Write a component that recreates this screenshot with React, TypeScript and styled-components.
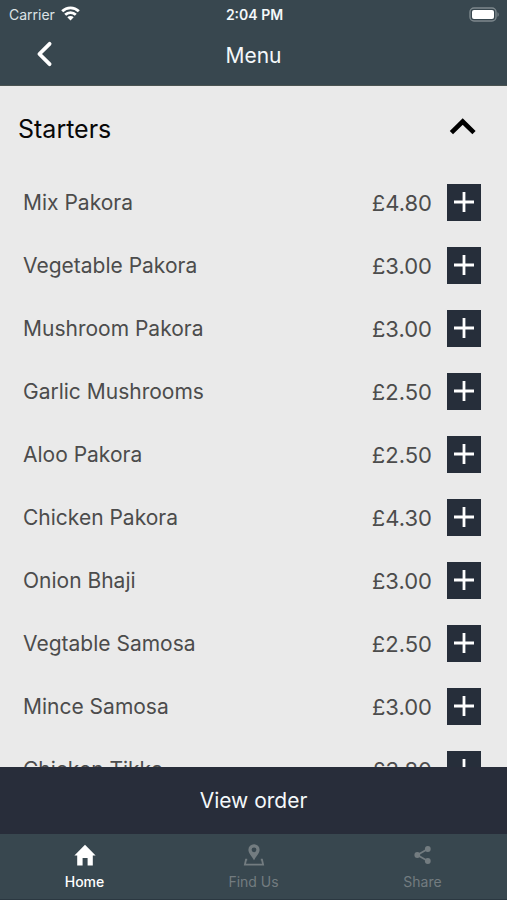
import React, { useState } from 'react';
import styled, { createGlobalStyle } from 'styled-components';

const GlobalStyle = createGlobalStyle`
  * {
    box-sizing: border-box;
  }

  body {
    margin: 0;
    font-family: Inter, 'Liberation Sans', sans-serif;
    background: #eaeaea;
  }

  button {
    margin: 0;
    padding: 0;
    border: 0;
    background: none;
    color: inherit;
    font: inherit;
    cursor: pointer;
  }
`;

const Screen = styled.div`
  display: flex;
  flex-direction: column;
  height: 100vh;
`;

const Header = styled.header`
  background: #38474f;
  color: #f4f8fa;
  border-bottom: 1px solid #4b5452;
`;

const StatusBar = styled.div`
  display: grid;
  grid-template-columns: 1fr auto 1fr;
  align-items: center;
  height: 28px;
  padding: 0 7px 0 9px;
  font-size: 14px;
`;

const Carrier = styled.div`
  display: flex;
  align-items: center;
  gap: 6px;
  color: #dde3e6;
`;

const Time = styled.div`
  font-weight: 600;
`;

const Battery = styled.svg`
  justify-self: end;
`;

const NavBar = styled.div`
  display: grid;
  grid-template-columns: 1fr auto 1fr;
  align-items: center;
  height: 57px;
  padding: 0 32px 2px;
`;

const BackButton = styled.button`
  display: flex;
  justify-self: start;
  padding-bottom: 4px;
`;

const Title = styled.h1`
  margin: 0;
  font-size: 21px;
  line-height: 28px;
  font-weight: 400;
`;

const Content = styled.main`
  flex: 1;
  min-height: 0;
  overflow-y: auto;
  scrollbar-width: none;
`;

const SectionHeader = styled.button`
  display: flex;
  align-items: center;
  justify-content: space-between;
  width: 100%;
  height: 85px;
  padding: 0 30px 0 18px;
  color: #080808;
  font-size: 25px;
  text-align: left;
`;

const List = styled.ul`
  margin: 0;
  padding: 0;
  list-style: none;
`;

const Item = styled.li`
  display: flex;
  align-items: center;
  height: 63px;
  padding: 0 26px 0 23px;
  color: #4c4c4c;
  font-size: 21px;
`;

const Name = styled.span`
  flex: 1;
`;

const Price = styled.span`
  margin-right: 15px;
  font-size: 22px;
`;

const AddButton = styled.button`
  display: flex;
  align-items: center;
  justify-content: center;
  width: 34px;
  height: 37px;
  padding-bottom: 2px;
  background: #262e3a;
  color: #fff;
`;

const OrderButton = styled.button`
  flex: none;
  height: 67px;
  background: #282d3a;
  color: #f4f8fa;
  font-size: 21px;
`;

const TabBar = styled.nav`
  display: flex;
  flex: none;
  height: 66px;
  background: #38474f;
  border-bottom: 1px solid #2b3841;
`;

const Tab = styled.a<{ $active?: boolean }>`
  display: flex;
  flex: 1;
  flex-direction: column;
  align-items: center;
  gap: 7px;
  padding-top: 10px;
  color: ${({ $active }) => ($active ? '#fff' : '#737c80')};
  font-size: 14px;
  line-height: 18px;
  font-weight: ${({ $active }) => ($active ? 500 : 400)};
  text-decoration: none;
`;

const items = [
  { name: 'Mix Pakora', price: 4.8 },
  { name: 'Vegetable Pakora', price: 3 },
  { name: 'Mushroom Pakora', price: 3 },
  { name: 'Garlic Mushrooms', price: 2.5 },
  { name: 'Aloo Pakora', price: 2.5 },
  { name: 'Chicken Pakora', price: 4.3 },
  { name: 'Onion Bhaji', price: 3 },
  { name: 'Vegtable Samosa', price: 2.5 },
  { name: 'Mince Samosa', price: 3 },
  { name: 'Chicken Tikka', price: 3.8 },
];

const WifiIcon = () => (
  <svg width="19" height="16" viewBox="0 0 19 16" fill="none" stroke="#fff" strokeWidth="2.8">
    <path d="M1.2 5.2a11.8 11.8 0 0 1 16.6 0" />
    <path d="M4.2 8.8a7.5 7.5 0 0 1 10.6 0" />
    <path d="M9.5 14.4 6.3 11.3a4.5 4.5 0 0 1 6.4 0z" fill="#fff" stroke="none" />
  </svg>
);

const BatteryIcon = () => (
  <Battery width="31" height="15" viewBox="0 0 31 15">
    <rect x="1" y="1" width="26" height="13" rx="4" fill="none" stroke="#7d888d" strokeWidth="1.4" />
    <rect x="3" y="3" width="22" height="9" rx="2" fill="#fff" />
    <path d="M28.5 5.2c1.6.6 1.6 4 0 4.6z" fill="#7d888d" />
  </Battery>
);

const BackIcon = () => (
  <svg width="24" height="28" viewBox="0 0 24 28" fill="none" stroke="#fff" strokeWidth="3.8">
    <path d="M17.6 3.8 7.4 14l10.2 10.2" strokeLinecap="round" strokeLinejoin="round" />
  </svg>
);

const ChevronIcon = ({ open }: { open: boolean }) => (
  <svg width="28" height="28" viewBox="0 0 28 28" fill="none" stroke="#000" strokeWidth="4.6">
    <path d={open ? 'M2.4 17.6 13.7 6.5 25 17.6' : 'M2.4 8.4 13.7 19.5 25 8.4'} />
  </svg>
);

const PlusIcon = () => (
  <svg width="20" height="20" viewBox="0 0 20 20" fill="none" stroke="currentColor" strokeWidth="2.8">
    <path d="M10 0v20M0 10h20" />
  </svg>
);

const HomeIcon = () => (
  <svg width="22" height="22" viewBox="0 0 22 22" fill="currentColor">
    <path d="M11 .8 21.6 11.6H18.8V21.6H13.6V14H8.6V21.6H3.2V11.6H.4z" />
  </svg>
);

const PinIcon = () => (
  <svg width="22" height="22" viewBox="0 0 22 22" fill="currentColor">
    <path
      fillRule="evenodd"
      d="M11 .2a5.6 5.6 0 0 1 5.600 5.600c0 3.700-3.300 6.300-5.600 10.400C8.700 12.100 5.400 9.500 5.400 5.800A5.600 5.600 0 0 1 11 .2zm0 3.200a2.400 2.400 0 1 0 0 4.800 2.400 2.400 0 0 0 0-4.800z"
    />
    <path d="M4.200 15.700H3L1.900 20.600H20.100L19 15.700H17.800" fill="none" stroke="currentColor" strokeWidth="1.800" />
  </svg>
);

const ShareIcon = () => (
  <svg width="22" height="22" viewBox="0 0 22 22" fill="currentColor">
    <path d="M15.800 5 5.300 11 15.800 17" fill="none" stroke="currentColor" strokeWidth="1.700" />
    <circle cx="15.800" cy="5" r="2.900" />
    <circle cx="5.300" cy="11" r="2.900" />
    <circle cx="15.800" cy="17" r="2.900" />
  </svg>
);

const App: React.FC<{}> = () => {
  const [open, setOpen] = useState(true);

  return (
    <Screen>
      <GlobalStyle />
      <Header>
        <StatusBar>
          <Carrier>
            Carrier
            <WifiIcon />
          </Carrier>
          <Time>2:04 PM</Time>
          <BatteryIcon />
        </StatusBar>
        <NavBar>
          <BackButton type="button" aria-label="Back">
            <BackIcon />
          </BackButton>
          <Title>Menu</Title>
        </NavBar>
      </Header>
      <Content>
        <SectionHeader type="button" aria-expanded={open} onClick={() => setOpen(!open)}>
          Starters
          <ChevronIcon open={open} />
        </SectionHeader>
        {open && (
          <List>
            {items.map(({ name, price }) => (
              <Item key={name}>
                <Name>{name}</Name>
                <Price>£{price.toFixed(2)}</Price>
                <AddButton type="button" aria-label={`Add ${name}`}>
                  <PlusIcon />
                </AddButton>
              </Item>
            ))}
          </List>
        )}
      </Content>
      <OrderButton type="button">View order</OrderButton>
      <TabBar>
        <Tab href="#home" $active>
          <HomeIcon />
          Home
        </Tab>
        <Tab href="#find-us">
          <PinIcon />
          Find Us
        </Tab>
        <Tab href="#share">
          <ShareIcon />
          Share
        </Tab>
      </TabBar>
    </Screen>
  );
};

export default App;
